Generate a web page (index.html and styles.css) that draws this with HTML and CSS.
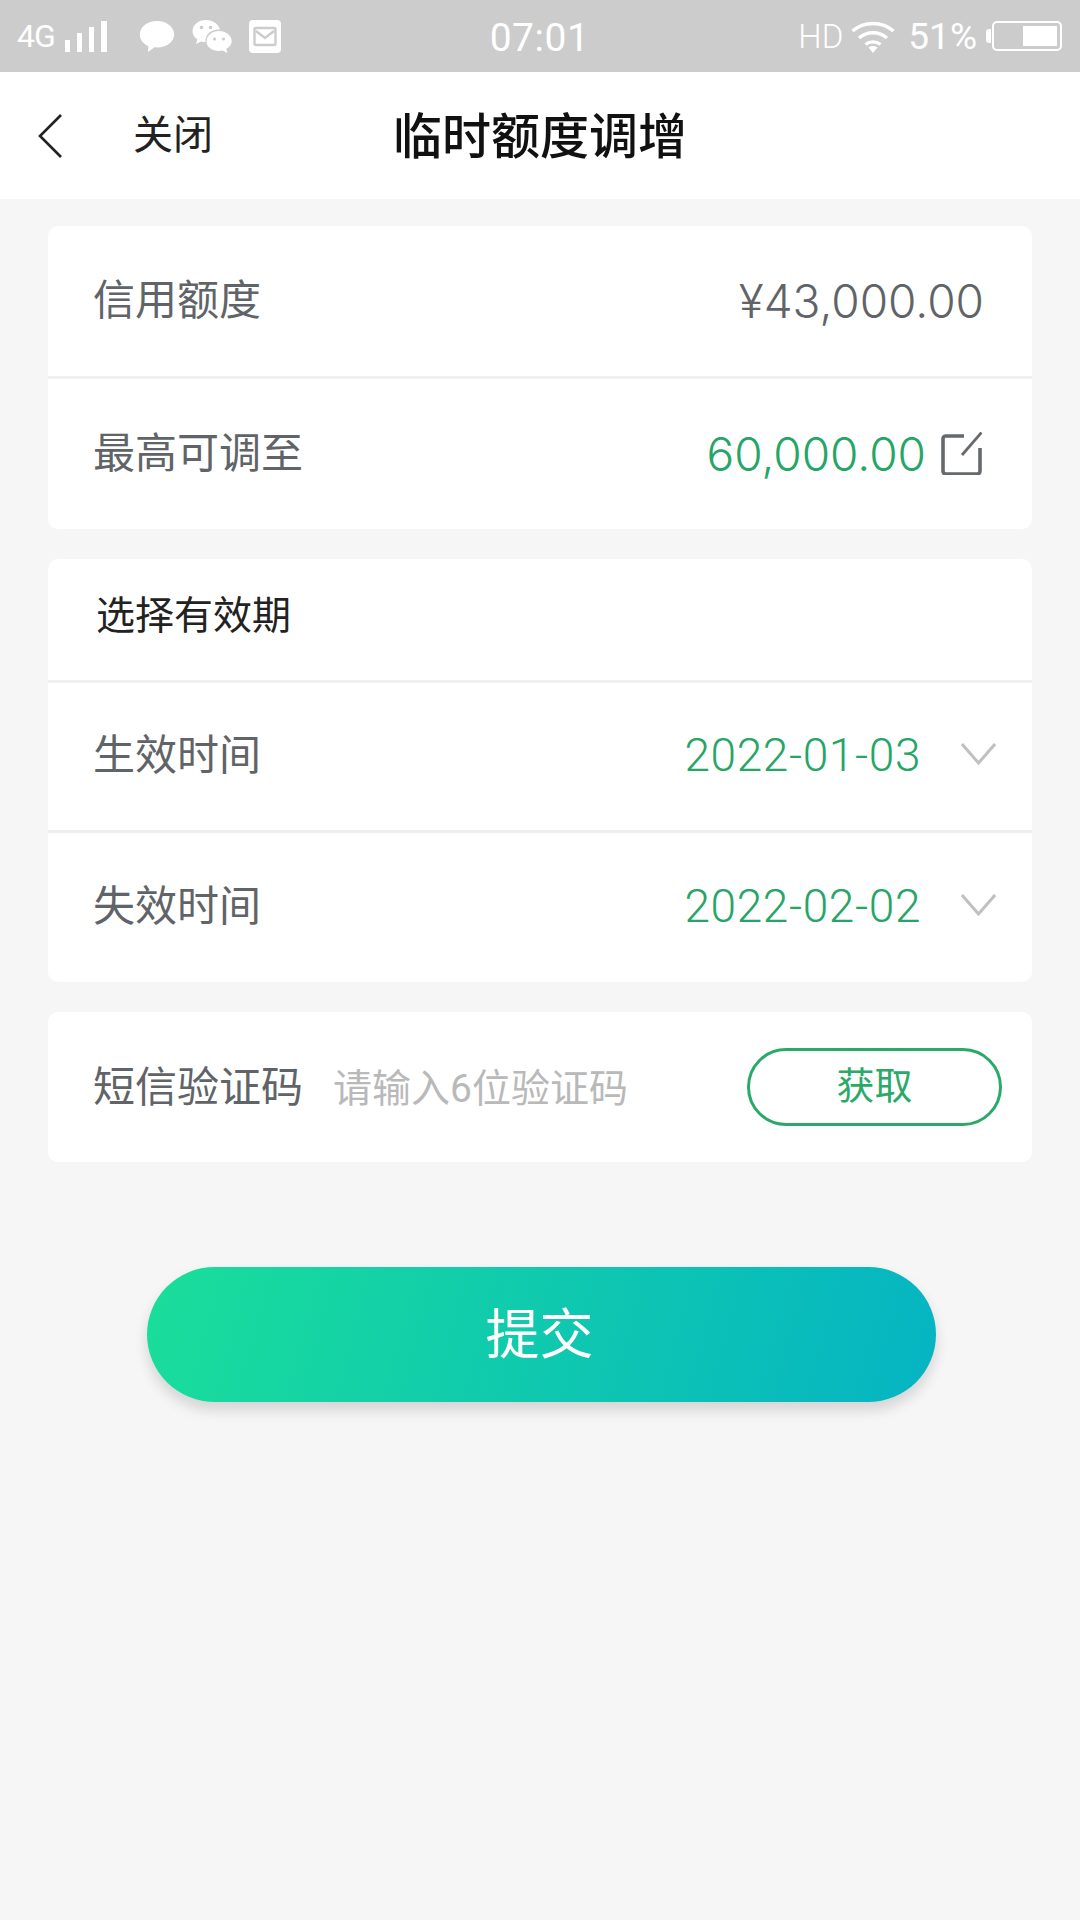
FILE: index.html
```html
<!DOCTYPE html>
<html lang="zh-CN">
<head>
    <meta charset="UTF-8">
    <meta name="viewport" content="width=device-width, initial-scale=1.0">
    <title>临时额度调增</title>
    <link rel="stylesheet" href="styles.css">
</head>
<body>
    <div class="status-bar">
        <div class="status-left">
            <span class="net">4G</span>
            <svg class="signal" width="44" height="32" viewBox="0 0 44 32"><path d="M1 32h5V20H1zM13 32h5V13h-5zM25 32h5V7h-5zM37 32h6V1h-6z" fill="#fff"/></svg>
            <svg class="msg" width="36" height="33" viewBox="0 0 36 33"><path d="M18 1C8.300 1 .8 7.200.8 14.500c0 5.200 3.500 9.300 8.600 11.700l-.4 5.800 6.600-4.700c.8.100 1.600.1 2.400.1 9.700 0 17.200-6 17.200-13C35.200 7.200 27.700 1 18 1z" fill="#fff"/></svg>
            <svg class="wechat" width="40" height="34" viewBox="0 0 40 34">
                <path d="M14 1C6.500 1 .5 5.800.5 12c0 3.400 1.900 6.300 4.800 8.300L4 25l5-2.600c1.500.4 2.800.6 4.500.7C12.800 15 19.500 10 28 10.500 26.500 5 20.800 1 14 1z" fill="#fff"/>
                <circle cx="9.500" cy="8.500" r="1.800" fill="#ccc"/>
                <circle cx="18.500" cy="8.500" r="1.800" fill="#ccc"/>
                <path d="M27 12c-6.800 0-12.500 4.400-12.500 10.200S20.200 32 27 32c1.300 0 2.500-.2 3.600-.5l4.900 2.500-1.200-4.100c3.300-1.900 5.400-4.700 5.400-7.700C39.700 16.400 33.800 12 27 12z" fill="#fff"/>
                <circle cx="22.500" cy="20" r="1.600" fill="#ccc"/>
                <circle cx="31.500" cy="20" r="1.600" fill="#ccc"/>
            </svg>
            <svg class="mail" width="32" height="33" viewBox="0 0 32 33">
                <rect width="32" height="33" rx="4" fill="#fff"/>
                <rect x="5.500" y="8" width="21" height="17" rx="1.500" fill="none" stroke="#ccc" stroke-width="2.400"/>
                <path d="M7 11l9 7 9-7" fill="none" stroke="#ccc" stroke-width="2.400"/>
            </svg>
        </div>
        <div class="clock">07:01</div>
        <div class="status-right">
            <span class="hd">HD</span>
            <svg class="wifi" width="44" height="33" viewBox="0 0 44 33" fill="none" stroke="#fff" stroke-width="3.400">
                <path d="M1.500 11C13 1 31 1 42.500 11"/>
                <path d="M8 18c8-7 20-7 28 0"/>
                <path d="M14.500 24.500c4.300-3.500 10.700-3.500 15 0"/>
                <path d="M17.500 27.500L22 33l4.500-5.500c-2.500-2-6.500-2-9 0z" fill="#fff" stroke="none"/>
            </svg>
            <span class="pct">51%</span>
            <div class="battery">
                <span class="battery-nub"></span>
                <div class="battery-body"><span class="battery-fill"></span></div>
            </div>
        </div>
    </div>

    <header class="nav">
        <svg class="back" width="26" height="46" viewBox="0 0 26 46"><path d="M24 2L3 23l21 21" fill="none" stroke="#222" stroke-width="2.600"/></svg>
        <span class="close">关闭</span>
        <h1>临时额度调增</h1>
    </header>

    <main>
        <section class="card">
            <div class="row row-credit">
                <span class="label">信用额度</span>
                <span class="value">¥43,000.00</span>
            </div>
            <div class="row row-max">
                <span class="label">最高可调至</span>
                <span class="value green">60,000.00</span>
                <svg class="edit" width="41" height="43" viewBox="0 0 41 43" fill="none" stroke="#666a6d" stroke-width="3.600">
                    <path d="M23 4H5Q2 4 2 7v32q0 3 3 3h31q3 0 3-3V16"/>
                    <path d="M40.500 .5L21 23" stroke-width="2.800"/>
                </svg>
            </div>
        </section>

        <section class="card">
            <div class="row row-title">
                <span class="card-title">选择有效期</span>
            </div>
            <div class="row row-date">
                <span class="label">生效时间</span>
                <span class="value green date">2022-01-03</span>
                <svg class="arrow" width="35" height="24" viewBox="0 0 35 24"><path d="M1 2l16.500 19L34 2" fill="none" stroke="#c0c0c0" stroke-width="3"/></svg>
            </div>
            <div class="row row-date row-date-last">
                <span class="label">失效时间</span>
                <span class="value green date">2022-02-02</span>
                <svg class="arrow" width="35" height="24" viewBox="0 0 35 24"><path d="M1 2l16.500 19L34 2" fill="none" stroke="#c0c0c0" stroke-width="3"/></svg>
            </div>
        </section>

        <section class="card">
            <div class="row row-code">
                <span class="label">短信验证码</span>
                <span class="placeholder">请输入6位验证码</span>
                <button class="get-code">获取</button>
            </div>
        </section>

        <button class="submit">提交</button>
    </main>
</body>
</html>
```

FILE: styles.css
```css
* {
    box-sizing: border-box;
}
html, body {
    margin: 0;
    padding: 0;
}
body {
    width: 1080px;
    height: 1920px;
    overflow: hidden;
    background-color: #f6f6f6;
    font-family: Roboto, "Noto Sans CJK SC", sans-serif;
}

/* status bar */
.status-bar {
    height: 72px;
    padding: 0 18px 0 17px;
    background-color: #cccccc;
    color: #fff;
    display: grid;
    grid-template-columns: 1fr auto 1fr;
    align-items: center;
}
.status-left,
.status-right {
    display: flex;
    align-items: center;
}
.status-right {
    justify-content: flex-end;
}
.net {
    font-size: 32px;
    letter-spacing: -1px;
    margin-right: 9px;
}
.msg {
    margin-left: 31px;
}
.wechat {
    margin-left: 17px;
}
.mail {
    margin-left: 17px;
}
.clock {
    font-size: 39px;
    letter-spacing: 0.5px;
    padding-top: 4px;
}
.hd {
    font-size: 33px;
    font-weight: 300;
    margin-right: 8px;
}
.pct {
    font-size: 37px;
    margin-left: 13px;
    margin-right: 9px;
}
.battery {
    display: flex;
    align-items: center;
}
.battery-nub {
    width: 5px;
    height: 14px;
    background-color: #fff;
    border-radius: 3px 0 0 3px;
}
.battery-body {
    width: 70px;
    height: 30px;
    margin-left: 1px;
    padding: 3px;
    border: 2px solid #fff;
    border-radius: 5px;
    display: flex;
    justify-content: flex-end;
}
.battery-fill {
    width: 34px;
    background-color: #fff;
}

/* nav */
.nav {
    height: 127px;
    background-color: #fff;
    position: relative;
    display: flex;
    align-items: center;
    padding-left: 37px;
}
.back {
    margin-right: 70px;
}
.close {
    font-size: 40px;
    color: #222;
    padding-bottom: 7px;
}
.nav h1 {
    position: absolute;
    left: 0;
    right: 0;
    margin: 0;
    padding-bottom: 7px;
    text-align: center;
    font-size: 49px;
    font-weight: 500;
    color: #111;
}

/* cards */
main {
    padding: 27px 48px 0;
}
.card {
    background-color: #fff;
    border-radius: 10px;
    margin-bottom: 30px;
    overflow: hidden;
}
.row {
    display: flex;
    align-items: center;
    padding: 0 48px 0 45px;
    border-top: 3px solid #eff0f1;
}
.row:first-child {
    border-top: none;
}
.row-credit {
    height: 150px;
}
.row-max {
    height: 153px;
    padding-right: 50px;
}
.row-title {
    height: 121px;
}
.row-date {
    height: 150px;
    padding-right: 36px;
}
.row-date-last {
    height: 152px;
}
.row-code {
    height: 150px;
    padding-right: 30px;
}
.label {
    font-size: 42px;
    color: #606468;
    padding-bottom: 10px;
}
.row-code .label {
    padding-bottom: 8px;
}
.card-title {
    font-size: 39px;
    color: #222;
    margin-left: 3px;
    padding-bottom: 16px;
}
.value {
    margin-left: auto;
    font-family: Inter, "Noto Sans CJK SC", sans-serif;
    font-size: 46px;
    font-weight: 300;
    color: #606468;
}
.green {
    color: #26a566;
}
.date {
    font-family: Roboto, "Noto Sans CJK SC", sans-serif;
    letter-spacing: 0.6px;
    padding-bottom: 4px;
}
.edit {
    margin-left: 15px;
    margin-bottom: 2px;
}
.arrow {
    margin-left: 40px;
    margin-bottom: 6px;
}
.placeholder {
    margin-left: 30px;
    font-size: 39px;
    color: #b9b9b9;
    padding-bottom: 4px;
}
.get-code {
    margin-left: auto;
    width: 255px;
    height: 78px;
    background-color: #fff;
    border: 3.5px solid #2aa968;
    border-radius: 39px;
    font-family: inherit;
    font-size: 38px;
    color: #2aa968;
    padding: 0 0 10px;
}

/* submit */
.submit {
    display: block;
    width: 789px;
    height: 135px;
    margin: 105px 0 0 99px;
    border: none;
    border-radius: 68px;
    background: linear-gradient(105deg, #1ade9a 0%, #05b4c3 100%);
    box-shadow: 0 8px 14px rgba(0, 0, 0, 0.14);
    font-family: inherit;
    font-size: 54px;
    color: #fff;
    padding: 0 4px 8px 0;
}
```
